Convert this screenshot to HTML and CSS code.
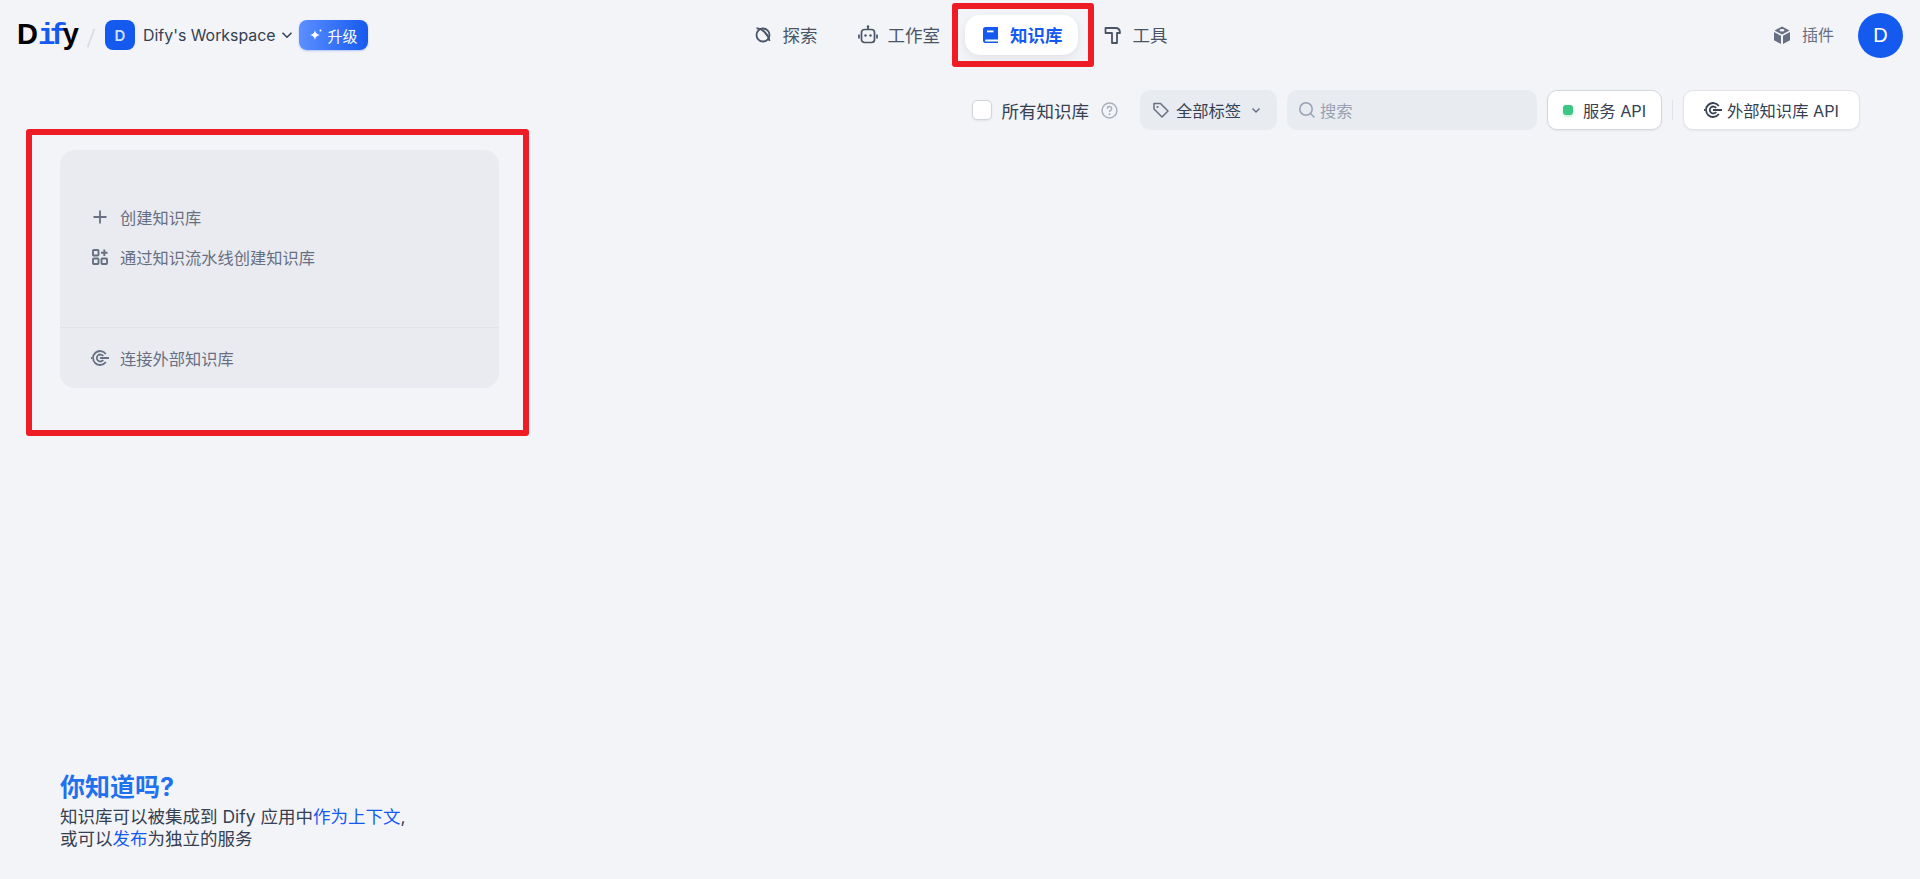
FILE: index.html
```html
<html>
<head>
<meta charset="utf-8">
<link rel="stylesheet" href="styles.css">
</head>
<body>

<div class="header">
  <div class="headLeft">
    <div class="logo"><span>D</span><span class="logoIf">if</span><span>y</span></div>
    <div class="slash"></div>
    <div class="wsBadge">D</div>
    <div class="wsName">Dify's Workspace</div>
    <svg class="wsArrow" viewBox="0 0 12 12"><path d="M1.5 3.800 6 8.200l4.500-4.400" fill="none" stroke="#354052" stroke-width="1.600"/></svg>
    <button class="upgrade">
      <svg viewBox="0 0 14 14" width="14" height="14"><path d="M6 2c.6 3 1.600 4.200 5 5-3.400.8-4.400 2-5 5-.6-3-1.600-4.200-5-5 3.400-.8 4.400-2 5-5z" fill="#fff"/><circle cx="11.500" cy="2.500" r="1" fill="#fff"/></svg>
      升级
    </button>
  </div>

  <div class="nav">
    <div class="navItem">
      <svg viewBox="0 0 20 20"><circle cx="10" cy="10" r="6.500" fill="none" stroke="#495464" stroke-width="1.800"/><path d="M3.500 3.500c2.500-.6 5.500 1 8 3.500s4.600 5.800 5 9" fill="none" stroke="#495464" stroke-width="1.800"/></svg>
      <span>探索</span>
    </div>
    <div class="navItem">
      <svg viewBox="0 0 20 20"><rect x="3.500" y="4.500" width="13" height="13" rx="3" fill="none" stroke="#495464" stroke-width="1.700"/><path d="M10 1.500v3M1 9.500v4M19 9.500v4" fill="none" stroke="#495464" stroke-width="1.700"/><circle cx="10" cy="1.500" r="1.200" fill="#495464"/><circle cx="7.500" cy="10.500" r="1.200" fill="#495464"/><circle cx="12.500" cy="10.500" r="1.200" fill="#495464"/></svg>
      <span>工作室</span>
    </div>
    <div class="navItem navOn">
      <svg viewBox="0 0 20 20"><path d="M3 4.500A2.500 2.500 0 0 1 5.500 2H18v12.500H5.500A1.500 1.500 0 0 0 5.500 16.500H18V18H5.500A2.500 2.500 0 0 1 3 15.500z" fill="#155aef"/><rect x="7" y="5.500" width="6.500" height="1.800" fill="#fff"/></svg>
      <span>知识库</span>
    </div>
    <div class="navItem">
      <svg viewBox="0 0 20 20"><path d="M2.500 3h10c2.700 0 4.500 2 4.500 5h-3v10H9V8H2.500z" fill="none" stroke="#495464" stroke-width="1.800" stroke-linejoin="round"/></svg>
      <span>工具</span>
    </div>
  </div>

  <div class="headRight">
    <div class="plugin">
      <svg viewBox="0 0 20 20" width="20" height="20"><path d="M10 1.500 17.500 5.500 10 9.500 2.500 5.500z" fill="#676f83"/><path d="M2 7l7 3.800V19l-7-3.800zM18 7l-7 3.800V19l7-3.800z" fill="#676f83"/><ellipse cx="10" cy="5.300" rx="2.500" ry="1.300" fill="#f2f4f8"/></svg>
      <span>插件</span>
    </div>
    <div class="avatar">D</div>
  </div>
</div>

<div class="toolbar">
  <div class="checkBox"></div>
  <div class="checkLabel">所有知识库</div>
  <svg class="help" viewBox="0 0 16 16"><circle cx="8" cy="8" r="7" fill="none" stroke="#a9afbb" stroke-width="1.400"/><path d="M6 6.300A2 2 0 1 1 8.600 8.200c-.4.200-.6.500-.6 1.100" fill="none" stroke="#a9afbb" stroke-width="1.400"/><circle cx="8" cy="11.500" r=".9" fill="#a9afbb"/></svg>
  <div class="tagPick">
    <svg viewBox="0 0 18 18" width="18" height="18"><path d="M2 2.500h6.500l7.500 7.500-6 6-8-8z" fill="none" stroke="#676f83" stroke-width="1.500" stroke-linejoin="round"/><circle cx="5.500" cy="6" r="1.100" fill="#676f83"/></svg>
    <span>全部标签</span>
    <svg class="tagArrow" viewBox="0 0 12 12"><path d="M2.500 4.500 6 8l3.500-3.500" fill="none" stroke="#676f83" stroke-width="1.500"/></svg>
  </div>
  <div class="search">
    <svg viewBox="0 0 18 18" width="18" height="18"><circle cx="8" cy="8" r="6.200" fill="none" stroke="#98a2b2" stroke-width="1.500"/><path d="m12.500 12.500 4 4" stroke="#98a2b2" stroke-width="1.500"/></svg>
    <span>搜索</span>
  </div>
  <button class="btn btnApi"><span class="dot"></span>服务 API</button>
  <div class="sep"></div>
  <button class="btn btnExt">
    <svg viewBox="0 0 20 20" width="20" height="20"><path d="M15.800 6A7 7 0 1 0 15.800 14" fill="none" stroke="#354052" stroke-width="1.800"/><path d="M13.200 8A3.500 3.500 0 1 0 13.200 12" fill="none" stroke="#354052" stroke-width="1.800"/><path d="M10 10h9M1 10h1" stroke="#354052" stroke-width="1.800"/></svg>
    外部知识库 API
  </button>
</div>

<div class="card">
  <div class="cardTop">
    <div class="cardRow">
      <svg viewBox="0 0 20 20"><path d="M10 3.500v13M3.500 10h13" stroke="#676f83" stroke-width="1.800"/></svg>
      创建知识库
    </div>
    <div class="cardRow">
      <svg viewBox="0 0 20 20"><g fill="none" stroke="#676f83" stroke-width="1.900"><rect x="3" y="3" width="5.500" height="5.500" rx=".8"/><rect x="3" y="11.500" width="5.500" height="5.500" rx=".8"/><rect x="11.500" y="11.500" width="5.500" height="5.500" rx=".8"/><path d="M14.300 2.500v6.500M11 5.800h6.500"/></g></svg>
      通过知识流水线创建知识库
    </div>
  </div>
  <div class="cardBottom">
    <div class="cardRow">
      <svg viewBox="0 0 20 20"><path d="M15.800 6A7 7 0 1 0 15.800 14" fill="none" stroke="#676f83" stroke-width="1.800"/><path d="M13.200 8A3.500 3.500 0 1 0 13.200 12" fill="none" stroke="#676f83" stroke-width="1.800"/><path d="M10 10h9M1 10h1" stroke="#676f83" stroke-width="1.800"/></svg>
      连接外部知识库
    </div>
  </div>
</div>

<div class="tip">
  <div class="tipTitle">你知道吗?</div>
  <div class="tipText">知识库可以被集成到 Dify 应用中<a href="#">作为上下文</a>,<br>或可以<a href="#">发布</a>为独立的服务</div>
</div>

<!-- red annotation boxes -->
<div class="mark markNav"></div>
<div class="mark markCard"></div>

</body>
</html>
```
FILE: styles.css
```css
* {box-sizing: border-box;}
body {margin: 0; height: 879px; overflow: hidden; display: flex; flex-direction: column;
  background-color: #f3f4f8; color: #354052;
  font-family: Inter, "Noto Sans CJK SC", sans-serif;}
svg {flex: none;}
button {font-family: inherit; cursor: pointer;}

.header {height: 70px; flex: none; display: grid; grid-template-columns: 1fr auto 1fr; align-items: center;}
.headLeft {display: flex; align-items: center; padding-left: 17px;}
.logo {font: bold 29px "Liberation Sans", sans-serif; color: #000; width: 62px; white-space: nowrap;}
.logoIf {font-family: "Liberation Mono", monospace; color: #155aef; letter-spacing: -5.500px; margin-right: 1px;}
.slash {width: 2px; height: 20px; background-color: #dcdfe5; transform: rotate(20deg); margin: 6px 0 0 11px;}
.wsBadge {width: 30px; height: 30px; margin-left: 13px; border-radius: 8px; background-color: #155aef;
  color: #d1e0ff; font-weight: 600; font-size: 15px; display: flex; align-items: center; justify-content: center;}
.wsName {margin-left: 8px; font-size: 15.900px; color: #354052;}
.wsArrow {width: 12px; height: 12px; margin-left: 5px;}
.upgrade {width: 69px; height: 30px; margin-left: 6px; padding: 0; border: 0; border-radius: 8px; color: #fff; font-size: 15px;
  background: linear-gradient(90deg, #5c8fff, #155aef); box-shadow: 0 1px 2px rgba(21,90,239,.3);
  display: flex; align-items: center; justify-content: center; gap: 5px;}

.nav {display: flex; gap: 10px;}
.navItem {height: 40px; padding: 0 15px; border-radius: 15px; display: flex; align-items: center; gap: 10px;
  font-size: 17.500px; color: #495464;}
.navItem svg {width: 20px; height: 20px;}
.navItem span {margin-bottom: 2px;}
.navOn {background-color: #fff; color: #155aef; font-weight: 600; box-shadow: 0 3px 8px rgba(16,24,40,.08);}

.headRight {display: flex; align-items: center; justify-content: flex-end; padding-right: 17px;}
.plugin {display: flex; align-items: center; gap: 10px; font-size: 16px; color: #676f83;}
.plugin span {margin-bottom: 2px;}
.avatar {width: 45px; height: 45px; margin-left: 24px; border-radius: 50%; background-color: #155aef; color: #fff;
  font: 20px "Liberation Sans", sans-serif; display: flex; align-items: center; justify-content: center;}

.toolbar {flex: none; height: 40px; margin-top: 20px; padding-right: 60px; display: flex; align-items: center; justify-content: flex-end;}
.checkBox {width: 20px; height: 20px; background-color: #fff; border: 1px solid #d0d5dc; border-radius: 5px;
  box-shadow: 0 1px 2px rgba(16,24,40,.08);}
.checkLabel {margin-left: 10px; font-size: 17.500px;}
.help {width: 17px; height: 17px; margin-left: 12px;}
.tagPick {width: 137px; height: 40px; margin-left: 22px; padding-left: 12px; border-radius: 10px; background-color: #e8ebf0;
  display: flex; align-items: center; font-size: 16.300px;}
.tagPick span {margin-left: 6px;}
.tagArrow {width: 12px; height: 12px; margin-left: 9px;}
.search {width: 250px; height: 40px; margin-left: 10px; padding-left: 11px; border-radius: 10px; background-color: #e8ebf0;
  display: flex; align-items: center; gap: 4px; font-size: 16.300px; color: #98a2b2;}
.btn {height: 40px; padding: 0; background-color: #fff; border: 1px solid #d3d7de; border-radius: 10px; color: #354052;
  font-size: 16.300px; display: flex; align-items: center; box-shadow: 0 1px 2px rgba(16,24,40,.06);}
.btnApi {width: 115px; margin-left: 10px; padding-left: 15px; gap: 10px;}
.dot {width: 10px; height: 10px; border-radius: 3px; background-color: #3cc684; box-shadow: 0 2px 3px rgba(60,198,132,.3);}
.sep {width: 1px; height: 20px; margin-left: 10px; background-color: #dfe2e8;}
.btnExt {width: 177px; margin-left: 10px; padding-left: 19px; gap: 4px; border-color: #e2e4ea;}

.card {flex: none; width: 439px; height: 238px; margin: 20px 0 0 60px; border-radius: 15px; background-color: #e9ebf0;
  display: flex; flex-direction: column;}
.cardTop {height: 178px; padding-bottom: 4px; display: flex; flex-direction: column; justify-content: center; border-bottom: 1px solid #e1e3e9;}
.cardBottom {flex: 1; display: flex; align-items: center;}
.cardRow {height: 40px; padding: 0 30px; display: flex; align-items: center; gap: 10px; font-size: 16.250px; color: #676f83;}
.cardRow svg {width: 20px; height: 20px;}

.tip {margin-top: auto; padding: 0 0 30px 60px;}
.tipTitle {font-size: 25px; font-weight: 700; line-height: 30px; margin-bottom: 4px; color: #1f71ee;}
.tipText {font-size: 17.500px; line-height: 21.500px; color: #354052;}
.tipText a {color: #155aef; text-decoration: none;}

.mark {position: absolute; border: 6px solid #ee1c25; border-radius: 3px;}
.markNav {left: 952px; top: 3px; width: 142px; height: 64px;}
.markCard {left: 26px; top: 129px; width: 503px; height: 307px;}
```
